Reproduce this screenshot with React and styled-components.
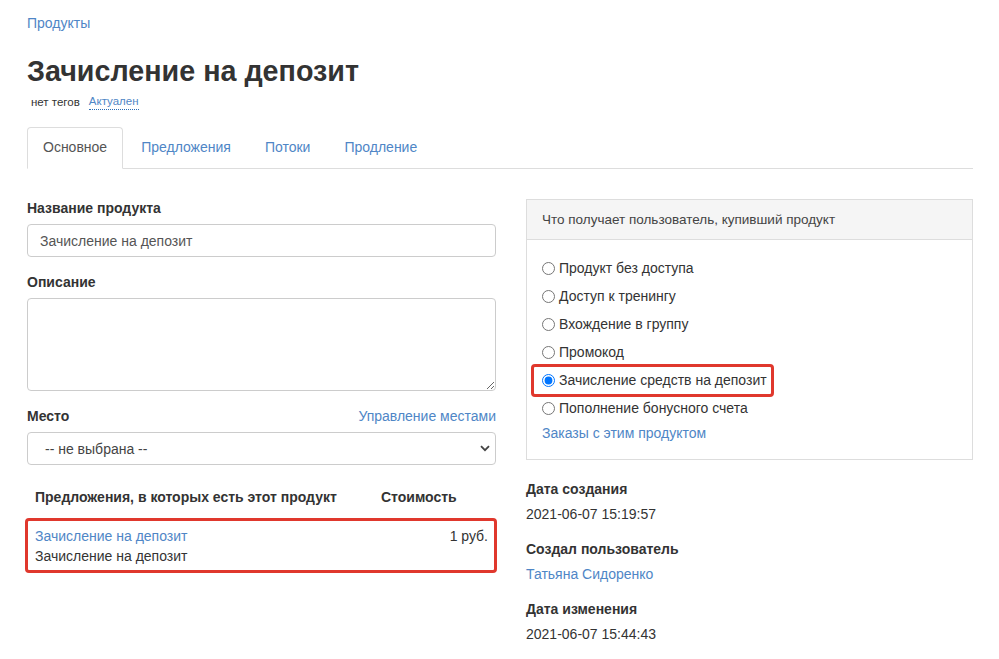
import styled, { createGlobalStyle } from "styled-components";

const GlobalStyle = createGlobalStyle`
  body {
    margin: 0;
    background: #fff;
    font-family: "Liberation Sans", Arial, sans-serif;
    color: #333;
  }
`;

const LINK = "#4f86c6";
const RED = "#e0382d";

const options = [
  "Продукт без доступа",
  "Доступ к тренингу",
  "Вхождение в группу",
  "Промокод",
  "Зачисление средств на депозит",
  "Пополнение бонусного счета",
];

const tabs = ["Основное", "Предложения", "Потоки", "Продление"];

const ChevronIcon = () => (
  <svg width="10" height="7" viewBox="0 0 10 7">
    <path d="M1 1.2 L5 5.2 L9 1.2" fill="none" stroke="#444" strokeWidth="1.8" />
  </svg>
);

const App = () => {
  return (
    <Page>
      <GlobalStyle />
      <Breadcrumb href="#">Продукты</Breadcrumb>
      <Title>Зачисление на депозит</Title>
      <Tags>
        <span>нет тегов</span>
        <StatusLink>Актуален</StatusLink>
      </Tags>

      <TabBar>
        {tabs.map((t, i) => (
          <Tab key={t} $active={i === 0}>
            {t}
          </Tab>
        ))}
      </TabBar>

      <Columns>
        <div>
          <Label>Название продукта</Label>
          <Input defaultValue="Зачисление на депозит" />

          <Label $spaced>Описание</Label>
          <TextArea />

          <LabelRow>
            <Label $spaced>Место</Label>
            <TextLink>Управление местами</TextLink>
          </LabelRow>
          <SelectBox>
            <span>-- не выбрана --</span>
            <ChevronIcon />
          </SelectBox>

          <TableHead>
            <NameCell>Предложения, в которых есть этот продукт</NameCell>
            <PriceCell>Стоимость</PriceCell>
          </TableHead>
          <OfferRow>
            <NameCell>
              <TextLink>Зачисление на депозит</TextLink>
              <div>Зачисление на депозит</div>
            </NameCell>
            <PriceCell $right>1 руб.</PriceCell>
          </OfferRow>
        </div>

        <div>
          <Panel>
            <PanelHeader>Что получает пользователь, купивший продукт</PanelHeader>
            <PanelBody>
              {options.map((o, i) => (
                <RadioRow key={o} $highlighted={i === 4}>
                  <Radio type="radio" name="kind" defaultChecked={i === 4} />
                  {o}
                </RadioRow>
              ))}
              <OrdersLink>Заказы с этим продуктом</OrdersLink>
            </PanelBody>
          </Panel>

          <Meta>
            <MetaLabel>Дата создания</MetaLabel>
            <MetaValue>2021-06-07 15:19:57</MetaValue>
            <MetaLabel>Создал пользователь</MetaLabel>
            <MetaValue>
              <TextLink>Татьяна Сидоренко</TextLink>
            </MetaValue>
            <MetaLabel>Дата изменения</MetaLabel>
            <MetaValue>2021-06-07 15:44:43</MetaValue>
          </Meta>
        </div>
      </Columns>
    </Page>
  );
};

export default App;

const Page = styled.div`
  width: 946px;
  padding: 14px 0 0 27px;
  font-size: 14px;
`;

const Breadcrumb = styled.a`
  display: block;
  line-height: 18px;
  color: ${LINK};
  text-decoration: none;
`;

const Title = styled.h1`
  margin: 22px 0 0;
  font-size: 28.7px;
  line-height: 34px;
  font-weight: 700;
  color: #333;
`;

const Tags = styled.div`
  display: flex;
  gap: 9px;
  margin: 6px 0 0 4px;
  font-size: 11.5px;
  line-height: 16px;
  color: #333;
`;

const StatusLink = styled.span`
  color: ${LINK};
  border-bottom: 1px dotted #2a6db5;
  line-height: 14px;
`;

const TabBar = styled.div`
  display: flex;
  margin-top: 17px;
  border-bottom: 1px solid #ddd;
`;

const Tab = styled.div`
  height: 40px;
  line-height: 39px;
  padding: 0 15px;
  margin-right: 2px;
  margin-bottom: -1px;
  color: ${({ $active }) => ($active ? "#555" : LINK)};
  background: ${({ $active }) => ($active ? "#fff" : "transparent")};
  border: 1px solid ${({ $active }) => ($active ? "#ddd" : "transparent")};
  border-bottom: ${({ $active }) => ($active ? "1px solid #fff" : "none")};
  border-radius: 4px 4px 0 0;
`;

const Columns = styled.div`
  display: grid;
  grid-template-columns: 469px 447px;
  gap: 30px;
  margin-top: 29px;
`;

const Label = styled.div`
  margin-top: ${({ $spaced }) => ($spaced ? "15px" : "0")};
  margin-bottom: 6px;
  font-weight: 700;
  line-height: 20px;
  color: #333;
`;

const LabelRow = styled.div`
  display: flex;
  justify-content: space-between;
  align-items: flex-end;

  & > span {
    margin-bottom: 6px;
    line-height: 20px;
  }
`;

const Input = styled.input`
  box-sizing: border-box;
  display: block;
  width: 100%;
  height: 33px;
  padding: 0 12px;
  border: 1px solid #ccc;
  border-radius: 4px;
  font: inherit;
  font-size: 14px;
  color: #555;
  outline: none;
`;

const TextArea = styled.textarea`
  box-sizing: border-box;
  display: block;
  width: 100%;
  height: 93px;
  border: 1px solid #ccc;
  border-radius: 4px;
  outline: none;
`;

const SelectBox = styled.div`
  box-sizing: border-box;
  display: flex;
  align-items: center;
  justify-content: space-between;
  height: 33px;
  padding: 0 5px 0 17px;
  border: 1px solid #ccc;
  border-radius: 4px;
  color: #444;
`;

const TextLink = styled.span`
  color: ${LINK};
  cursor: pointer;
`;

const TableHead = styled.div`
  display: flex;
  margin-top: 22px;
  padding-bottom: 11px;
  font-weight: 700;
  line-height: 20px;
`;

const NameCell = styled.div`
  flex: 1;
  padding-left: 8px;
`;

const PriceCell = styled.div`
  width: 123px;
  box-sizing: border-box;
  padding: 0 8px;
  text-align: ${({ $right }) => ($right ? "right" : "left")};
`;

const OfferRow = styled.div`
  display: flex;
  margin: 0 -1px 0 -2px;
  padding: 5px 0 4px;
  border: 3px solid ${RED};
  border-radius: 4px;
  line-height: 20px;

  & > ${NameCell} {
    padding-left: 7px;
  }
  & > ${PriceCell} {
    padding-right: 6px;
  }
`;

const Panel = styled.div`
  margin-top: 1px;
  border: 1px solid #ddd;
`;

const PanelHeader = styled.div`
  height: 40px;
  line-height: 39px;
  padding: 0 15px;
  box-sizing: border-box;
  background: #f5f5f5;
  border-bottom: 1px solid #ddd;
  font-size: 13.5px;
  color: #444;
`;

const PanelBody = styled.div`
  padding: 14px 15px 16px;
`;

const RadioRow = styled.label`
  position: relative;
  display: flex;
  align-items: center;
  width: max-content;
  height: 28px;
  color: #333;

  ${({ $highlighted }) =>
    $highlighted &&
    `
    &::after {
      content: "";
      position: absolute;
      top: -2px;
      bottom: -3px;
      left: -11px;
      right: -7px;
      border: 3px solid ${RED};
      border-radius: 4px;
      pointer-events: none;
    }
  `}
`;

const Radio = styled.input`
  width: 13px;
  height: 13px;
  margin: 0 4px 0 0;
`;

const OrdersLink = styled.div`
  margin-top: 1px;
  line-height: 20px;
  color: ${LINK};
`;

const Meta = styled.div`
  margin-top: 19px;
  line-height: 20px;
`;

const MetaLabel = styled.div`
  font-weight: 700;
  color: #333;
  margin-top: 15px;

  &:first-child {
    margin-top: 0;
  }
`;

const MetaValue = styled.div`
  margin-top: 5px;
  color: #333;
`;
